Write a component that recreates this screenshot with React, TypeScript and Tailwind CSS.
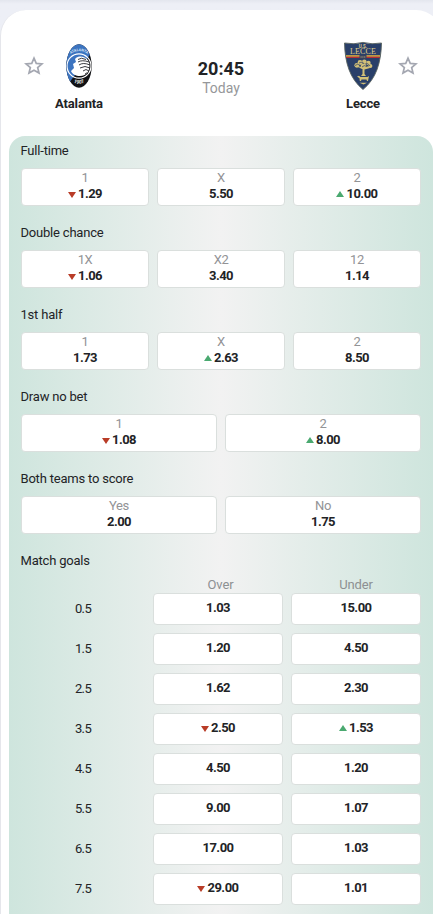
type Trend = "up" | "down";
type Pick = { label?: string; value: string; trend?: Trend };
type Market = { title: string; picks: Pick[] };

const markets: Market[] = [
  {
    title: "Full-time",
    picks: [
      { label: "1", value: "1.29", trend: "down" },
      { label: "X", value: "5.50" },
      { label: "2", value: "10.00", trend: "up" },
    ],
  },
  {
    title: "Double chance",
    picks: [
      { label: "1X", value: "1.06", trend: "down" },
      { label: "X2", value: "3.40" },
      { label: "12", value: "1.14" },
    ],
  },
  {
    title: "1st half",
    picks: [
      { label: "1", value: "1.73" },
      { label: "X", value: "2.63", trend: "up" },
      { label: "2", value: "8.50" },
    ],
  },
  {
    title: "Draw no bet",
    picks: [
      { label: "1", value: "1.08", trend: "down" },
      { label: "2", value: "8.00", trend: "up" },
    ],
  },
  {
    title: "Both teams to score",
    picks: [
      { label: "Yes", value: "2.00" },
      { label: "No", value: "1.75" },
    ],
  },
];

const goals: { line: string; over: Pick; under: Pick }[] = [
  { line: "0.5", over: { value: "1.03" }, under: { value: "15.00" } },
  { line: "1.5", over: { value: "1.20" }, under: { value: "4.50" } },
  { line: "2.5", over: { value: "1.62" }, under: { value: "2.30" } },
  { line: "3.5", over: { value: "2.50", trend: "down" }, under: { value: "1.53", trend: "up" } },
  { line: "4.5", over: { value: "4.50" }, under: { value: "1.20" } },
  { line: "5.5", over: { value: "9.00" }, under: { value: "1.07" } },
  { line: "6.5", over: { value: "17.00" }, under: { value: "1.03" } },
  { line: "7.5", over: { value: "29.00", trend: "down" }, under: { value: "1.01" } },
];

function Arrow({ trend }: { trend: Trend }) {
  return (
    <svg width="8" height="6" viewBox="0 0 8 6" className={trend === "up" ? "mr-0.5 mb-px" : "mr-0.5 mt-0.5"}>
      {trend === "up" ? (
        <path d="M4 0 8 6H0Z" fill="#4aa970" />
      ) : (
        <path d="M0 0H8L4 6Z" fill="#b93c27" />
      )}
    </svg>
  );
}

function Odds({ value, trend }: Pick) {
  return (
    <span className="flex h-4 items-center justify-center text-[13px] leading-4 font-bold tracking-[-0.5px] text-[#222326]">
      {trend && <Arrow trend={trend} />}
      {value}
    </span>
  );
}

function PickButton(pick: Pick) {
  return (
    <button className="flex h-[38px] flex-1 flex-col items-center rounded-[4px] border border-[#dadfdd] bg-white pt-px">
      <span className="text-[13px] leading-4 tracking-[-0.4px] text-[#929396]">{pick.label}</span>
      <Odds {...pick} />
    </button>
  );
}

function GoalButton(pick: Pick) {
  return (
    <button className="flex h-8 w-[130px] flex-col items-center rounded-[4px] border border-[#dadfdd] bg-white pt-[6px]">
      <Odds {...pick} />
    </button>
  );
}

function Star() {
  return (
    <svg width="20" height="20" viewBox="0 0 20 20" fill="none" stroke="#a4a7b1" strokeWidth="1.7">
      <path d="M10 2.2 12.25 7.35 18 7.85 13.65 11.55 15 17.1 10 14.2 5 17.1 6.35 11.55 2 7.85 7.75 7.35Z" />
    </svg>
  );
}

function AtalantaCrest() {
  return (
    <svg width="26" height="44" viewBox="0 0 26 44">
      <defs>
        <clipPath id="oval">
          <ellipse cx="13" cy="22" rx="12.7" ry="21.7" />
        </clipPath>
        <path id="nameArc" d="M3.5 11Q13 3 22.5 11" />
        <path id="yearArc" d="M6 37.5Q13 42 20 37.5" />
      </defs>
      <g clipPath="url(#oval)">
        <rect width="26" height="44" fill="#101114" />
        <path d="M0 0H26V8L3 39 0 32Z" fill="#3c74c0" />
        <ellipse cx="13" cy="22" rx="12" ry="12.2" fill="none" stroke="#fff" strokeWidth="1.2" />
        <path d="M10 14C16 10 23.5 15 23.5 21C23.5 28 20 32 14 32C10 32 6 30 5 27L8 24 7 20 10 18 9 15Z" fill="#fff" />
        <path d="M12 15.5Q15 13 20 15.5M12 18Q16 15.5 23 18M13 21Q17 18 24 21M14 24Q19 21 24 24M17 27Q20 24 23 27M19 30Q21 28 22 30" fill="none" stroke="#24262b" strokeWidth="0.9" />
      </g>
      <text fill="#dbe7f7" fontSize="3.6" fontWeight="700">
        <textPath href="#nameArc" startOffset="50%" textAnchor="middle">ATALANTA</textPath>
      </text>
      <text fill="#eee" fontSize="5" fontWeight="700">
        <textPath href="#yearArc" startOffset="50%" textAnchor="middle">1907</textPath>
      </text>
    </svg>
  );
}

function LecceCrest() {
  return (
    <svg width="40" height="50" viewBox="0 0 40 50">
      <path d="M1.5 2Q11 3.8 20 1.4Q29 3.8 38.5 2C38 22 33 38 20 48.5C7 38 2 22 1.5 2Z" fill="#293f69" stroke="#58625f" strokeWidth="0.9" />
      <path d="M3 14.9H37" stroke="#edb83d" strokeWidth="1.5" />
      <path d="M3.2 16.3H36.8" stroke="#b52e37" strokeWidth="1.3" />
      <rect x="16.5" y="14" width="7" height="4" fill="#39415e" />
      <path d="M17.5 16H22.5" stroke="#b3a774" strokeWidth="1.2" strokeDasharray="1.2 0.6" />
      <text x="20" y="6.6" textAnchor="middle" fontSize="4.5" fontWeight="700" fill="#d7c78d">U.S.</text>
      <text x="20" y="13.2" textAnchor="middle" textLength="26" fontSize="8" className="font-['Liberation_Serif',serif]" fill="#e1d28d">LECCE</text>
      <g fill="#d2c077">
        <circle cx="13.8" cy="24.3" r="2.4" />
        <circle cx="17" cy="21.5" r="2.4" />
        <circle cx="21.3" cy="20.8" r="2.3" />
        <circle cx="25.4" cy="22" r="2.3" />
        <circle cx="27.4" cy="25" r="2" />
        <circle cx="20.5" cy="25.2" r="2.8" />
        <path d="M14 26 19.5 28V33L18 35H23L21.5 33V28.5L27 27 26 25.5 14 25Z" />
        <path d="M14 35.5 16 34.8 17.5 36H24.5L26 35 25.5 37.5 25 40H24L23.5 38.5H18.5L18 40H16.8L16.5 37.2Z" />
        <path d="M16.5 41.7H24L20.5 43.6Z" />
      </g>
      <path d="M12 24.5Q15 22 17 24.5M16 22Q20 20 21 23M19 26Q21 23.5 24 25.5M23 22Q26 23 27 25M15.5 26.5 18 25" fill="none" stroke="#293f69" strokeWidth="0.7" />
    </svg>
  );
}

export default function App() {
  return (
    <div className="h-[914px] w-[433px] overflow-hidden bg-linear-to-b from-[#e3e6ee] to-[#edeff6] to-[4px] pt-2.5 font-[Roboto,sans-serif] text-[#222326]">
      <main className="h-[904px] w-[442px] rounded-t-[26px] border-l border-[#e5e6eb] bg-white">
        <header className="flex h-[126px] w-[440px] px-[23px] pt-[31px]">
          <div className="pt-[15px]"><Star /></div>
          <div className="flex w-[68px] flex-col items-center pl-[2px]">
            <div className="flex h-[53px] items-start pt-[3px]"><AtalantaCrest /></div>
            <div className="text-[13px] leading-5 font-bold tracking-[-0.15px]">Atalanta</div>
          </div>
          <div className="flex flex-1 flex-col items-center pt-[18px]">
            <div className="text-[18px] leading-5 font-bold">20:45</div>
            <div className="text-sm leading-[19px] text-[#96979a]">Today</div>
          </div>
          <div className="flex w-[68px] flex-col items-center pr-[2px]">
            <div className="h-[53px]"><LecceCrest /></div>
            <div className="text-[13px] leading-5 font-bold tracking-[-0.15px]">Lecce</div>
          </div>
          <div className="pt-[15px]"><Star /></div>
        </header>

        <div className="ml-2 h-[778px] w-[424px] rounded-t-[16px] bg-linear-to-r from-[#cee5dd] via-[#f2f2f2] to-[#cee5dd] px-3">
          {markets.map((market) => (
            <section key={market.title} className="h-[82px]">
              <h2 className="-ml-[0.5px] flex h-8 items-center pb-[3px] text-[13px] leading-4 tracking-[-0.2px]">{market.title}</h2>
              <div className="flex gap-2">
                {market.picks.map((pick) => <PickButton key={pick.label} {...pick} />)}
              </div>
            </section>
          ))}
          <section>
            <h2 className="-ml-[0.5px] flex h-8 items-center pb-[3px] text-[13px] leading-4 tracking-[-0.2px]">Match goals</h2>
            <div className="flex h-[15px] justify-end gap-2 text-[13px] leading-[13px] tracking-[-0.1px] text-[#8d9092]">
              <span className="w-[130px] pl-[5px] text-center">Over</span>
              <span className="w-[130px] text-center">Under</span>
            </div>
            <div className="flex flex-col gap-2">
              {goals.map((goal) => (
                <div key={goal.line} className="flex gap-2">
                  <span className="w-[124px] text-center text-[13px] leading-8 tracking-[-0.6px]">{goal.line}</span>
                  <GoalButton {...goal.over} />
                  <GoalButton {...goal.under} />
                </div>
              ))}
            </div>
          </section>
        </div>
      </main>
    </div>
  );
}
